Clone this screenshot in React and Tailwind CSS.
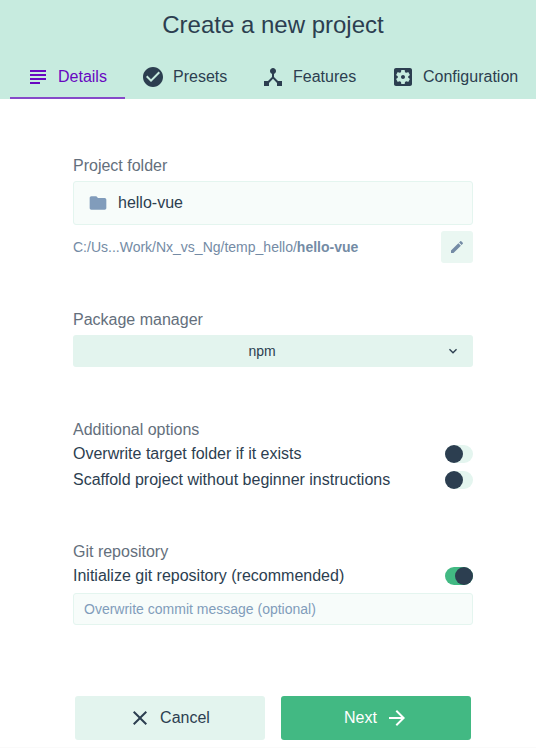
import React from 'react';

const PATHS = {
  subject: 'M14 17H4v2h10v-2zm6-8H4v2h16V9zM4 15h16v-2H4v2zM4 5v2h16V5H4z',
  check: 'M12 2C6.48 2 2 6.48 2 12s4.48 10 10 10 10-4.48 10-10S17.52 2 12 2zm-2 15l-5-5 1.41-1.41L10 14.17l7.59-7.59L19 8l-9 9z',
  hub: 'M17 16l-4-4V8.82C14.16 8.4 15 7.3 15 6c0-1.66-1.34-3-3-3S9 4.34 9 6c0 1.3.84 2.4 2 2.82V12l-4 4H3v5h5v-3.05l4-4.2 4 4.2V21h5v-5h-4z',
  settings: 'M12 10c-1.1 0-2 .9-2 2s.9 2 2 2 2-.9 2-2-.9-2-2-2zm7-7H5c-1.11 0-2 .9-2 2v14c0 1.1.89 2 2 2h14c1.11 0 2-.9 2-2V5c0-1.1-.89-2-2-2zm-1.75 9c0 .23-.02.46-.05.68l1.48 1.16c.13.11.17.3.08.45l-1.4 2.42c-.09.15-.27.21-.43.15l-1.74-.7c-.36.28-.76.51-1.18.69l-.26 1.85c-.03.17-.18.3-.35.3h-2.8c-.17 0-.32-.13-.35-.29l-.26-1.85c-.43-.18-.82-.41-1.18-.69l-1.74.7c-.16.06-.34 0-.43-.15l-1.4-2.42c-.09-.15-.05-.34.08-.45l1.48-1.16c-.03-.23-.05-.46-.05-.69 0-.23.02-.46.05-.68l-1.48-1.16c-.13-.11-.17-.3-.08-.45l1.4-2.42c.09-.15.27-.21.43-.15l1.74.7c.36-.28.76-.51 1.18-.69l.26-1.85c.03-.17.18-.3.35-.3h2.8c.17 0 .32.13.35.29l.26 1.85c.43.18.82.41 1.18.69l1.74-.7c.16-.06.34 0 .43.15l1.4 2.42c.09.15.05.34-.08.45l-1.48 1.16c.03.23.05.46.05.69z',
  folder: 'M10 4H4c-1.1 0-1.99.9-1.99 2L2 18c0 1.1.9 2 2 2h16c1.1 0 2-.9 2-2V8c0-1.1-.9-2-2-2h-8l-2-2z',
  edit: 'M3 17.25V21h3.75L17.81 9.94l-3.75-3.75L3 17.25zM20.71 7.04c.39-.39.39-1.02 0-1.41l-2.34-2.34c-.39-.39-1.02-.39-1.41 0l-1.83 1.83 3.75 3.75 1.83-1.83z',
  down: 'M16.59 8.59L12 13.17 7.41 8.59 6 10l6 6 6-6z',
  close: 'M19 6.41L17.59 5 12 10.59 6.41 5 5 6.41 10.59 12 5 17.59 6.41 19 12 13.41 17.59 19 19 17.59 13.41 12z',
  forward: 'M12 4l-1.41 1.41L16.17 11H4v2h12.17l-5.58 5.59L12 20l8-8z',
};

function Icon({ name, className = 'size-6' }) {
  return (
    <svg viewBox="0 0 24 24" fill="currentColor" aria-hidden="true" className={`shrink-0 ${className}`}>
      <path d={PATHS[name]} />
    </svg>
  );
}

function Tab({ icon, label, width, active }) {
  return (
    <button
      type="button"
      className={`flex h-11 shrink-0 items-center gap-2 border-b-2 pt-0.5 pl-4 whitespace-nowrap ${width} ${
        active ? 'border-[#8649c9] text-[#6806c1]' : 'border-transparent'
      }`}
    >
      <Icon name={icon} />
      <span>{label}</span>
    </button>
  );
}

function Label({ children }) {
  return <div className="h-6 pt-px text-[#646f7c]">{children}</div>;
}

function Toggle({ label, on }) {
  return (
    <div className="flex h-[26px] items-center justify-between">
      <span>{label}</span>
      <span role="switch" aria-checked={!!on} className={`flex h-[18px] w-7 rounded-full ${on ? 'justify-end bg-[#42b983]' : 'bg-[#e4f5ef]'}`}>
        <span className="size-[18px] rounded-full bg-[#2c3e50]" />
      </span>
    </div>
  );
}

export default function App() {
  return (
    <div className="flex h-[748px] w-[536px] flex-col overflow-hidden bg-white font-['Liberation_Sans',Arial,sans-serif] text-base leading-6 text-[#2c3e50]">
      <header className="h-[99px] shrink-0 bg-[#c7ebdf]">
        <h1 className="flex h-[55px] items-start justify-center pt-[9px] pl-[10px] text-2xl leading-8">Create a new project</h1>
        <nav className="flex pl-[10px]">
          <Tab icon="subject" label="Details" width="w-[115px]" active />
          <Tab icon="check" label="Presets" width="w-[120px]" />
          <Tab icon="hub" label="Features" width="w-[130px]" />
          <Tab icon="settings" label="Configuration" width="w-[161px]" />
        </nav>
      </header>

      <main className="ml-[73px] flex w-[400px] flex-col pt-[54px]">
        <section className="h-[154px]">
          <Label>Project folder</Label>
          <div className="mt-1 flex h-11 items-center gap-[10px] rounded-[3px] border border-[#e4f5ef] bg-[#f7fcfa] pl-[14px]">
            <Icon name="folder" className="size-5 text-[#819cbb]" />
            <span>hello-vue</span>
          </div>
          <div className="mt-1.5 flex h-8 items-center justify-between text-sm text-[#748ba5]">
            <span>C:/Us...Work/Nx_vs_Ng/temp_hello/<b>hello-vue</b></span>
            <button type="button" aria-label="Edit" className="flex size-8 items-center justify-center rounded-[3px] bg-[#eaf7f2]">
              <Icon name="edit" className="size-4" />
            </button>
          </div>
        </section>

        <section className="h-[110px]">
          <Label>Package manager</Label>
          <div className="mt-1 flex h-8 items-center rounded-[3px] bg-[#e3f4ee] pr-3 text-sm">
            <span className="flex-1 pl-[6px] text-center">npm</span>
            <Icon name="down" className="size-4" />
          </div>
        </section>

        <section className="h-[122px]">
          <Label>Additional options</Label>
          <Toggle label="Overwrite target folder if it exists" />
          <Toggle label="Scaffold project without beginner instructions" />
        </section>

        <section className="h-[157px]">
          <Label>Git repository</Label>
          <Toggle label="Initialize git repository (recommended)" on />
          <input
            type="text"
            placeholder="Overwrite commit message (optional)"
            className="mt-1 block h-8 w-full rounded-[3px] border border-[#e4f5ef] bg-[#f7fcfa] px-[10px] text-sm placeholder:text-[#819cbb]"
          />
        </section>
      </main>

      <footer className="flex h-[52px] shrink-0 items-start gap-4 border-b border-[#fafafa] pl-[75px]">
        <button type="button" className="flex h-11 w-[190px] items-center justify-center gap-2 rounded-[3px] bg-[#e3f4ee] pr-0.5">
          <Icon name="close" />
          <span>Cancel</span>
        </button>
        <button type="button" className="flex h-11 w-[190px] items-center justify-center gap-2 rounded-[3px] bg-[#42b983] pl-px text-white">
          <span>Next</span>
          <Icon name="forward" />
        </button>
      </footer>
    </div>
  );
}
